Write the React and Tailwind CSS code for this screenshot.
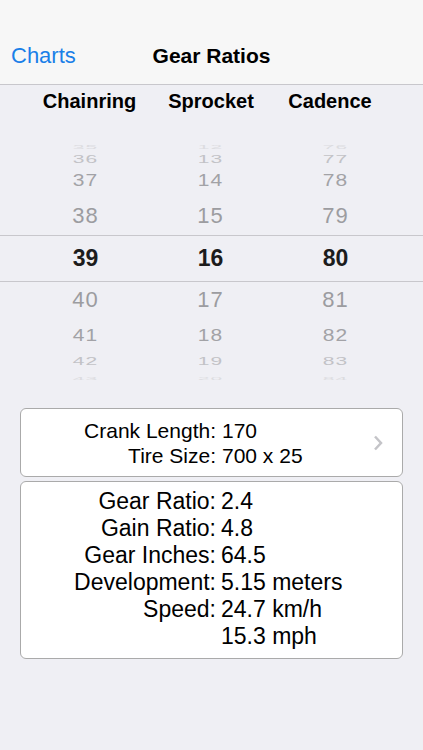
import React from "react";

const rows = [
  { h: "h-[11px]", vals: ["35", "12", "76"], cls: "text-[21px] tracking-[1px] text-[#dcdce0] scale-y-[0.22]" },
  { h: "h-[13px]", vals: ["36", "13", "77"], cls: "text-[21px] tracking-[1px] text-[#c2c2c6] scale-y-[0.55]" },
  { h: "h-[36px]", vals: ["37", "14", "78"], cls: "text-[21px] tracking-[1px] text-[#a2a2a6] scale-y-[0.82]" },
  { h: "h-[38px]", vals: ["38", "15", "79"], cls: "text-[22px] tracking-[1px] text-[#9c9ca0] scale-y-[0.97]" },
  { h: "h-[47px]", vals: ["39", "16", "80"], cls: "text-[23px] font-bold text-[#1c1c1c]", selected: true },
  { h: "h-[35px]", vals: ["40", "17", "81"], cls: "text-[22px] tracking-[1px] text-[#9c9ca0] scale-y-[0.97]" },
  { h: "h-[34px]", vals: ["41", "18", "82"], cls: "text-[21px] tracking-[1px] text-[#a2a2a6] scale-y-[0.8]" },
  { h: "h-[17px]", vals: ["42", "19", "83"], cls: "text-[21px] tracking-[1px] text-[#c2c2c6] scale-y-[0.5]" },
  { h: "h-[10px]", vals: ["43", "20", "84"], cls: "text-[21px] tracking-[1px] text-[#dcdce0] scale-y-[0.2]" },
];

const results = [
  ["Gear Ratio:", "2.4"],
  ["Gain Ratio:", "4.8"],
  ["Gear Inches:", "64.5"],
  ["Development:", "5.15 meters"],
  ["Speed:", "24.7 km/h"],
  ["", "15.3 mph"],
];

export default function App() {
  return (
    <div className="min-h-screen bg-[#efeff4] font-['Liberation_Sans',Arial,sans-serif] text-black">
      {/* Nav bar */}
      <div className="bg-[#f7f7f7] border-b border-[#c8c7cc] pt-[27px]">
        <div className="relative h-[57px] flex items-center justify-center">
          <span className="absolute left-[11px] text-[22px] text-[#1a7fe8]">Charts</span>
          <span className="text-[21px] font-bold">Gear Ratios</span>
        </div>
      </div>

      {/* Column headers */}
      <div className="grid grid-cols-[125px_118px_120px] pl-[27px] h-[32px] items-center text-[20px] font-bold">
        <span className="text-center">Chainring</span>
        <span className="text-center">Sprocket</span>
        <span className="text-center">Cadence</span>
      </div>

      {/* Picker */}
      <div className="mt-[20px] flex flex-col">
        {rows.map((r, i) => (
          <div
            key={i}
            className={`${r.h} grid grid-cols-[125px_125px_125px] pl-[23px] items-center ${
              r.selected ? "border-y border-[#c8c7cc]" : ""
            }`}
          >
            {r.vals.map((v, j) => (
              <span key={j} className={`text-center leading-none ${r.cls}`}>
                {v}
              </span>
            ))}
          </div>
        ))}
      </div>

      {/* Settings card */}
      <div className="mx-[20px] mt-[30px] h-[69px] bg-white border border-[#aaaaaa] rounded-[6px] flex items-center">
        <div className="flex-1 grid grid-cols-[195px_1fr] gap-x-[6px] text-[21px] leading-[25px]">
          <span className="text-right">Crank Length:</span>
          <span>170</span>
          <span className="text-right">Tire Size:</span>
          <span>700 x 25</span>
        </div>
        <svg width="10" height="16" viewBox="0 0 10 16" className="mr-[19px]">
          <polyline points="2,1.5 8,8 2,14.5" fill="none" stroke="#c4c4c8" strokeWidth="2.5" />
        </svg>
      </div>

      {/* Results card */}
      <div className="mx-[20px] mt-[4px] h-[178px] bg-white border border-[#aaaaaa] rounded-[6px] pt-[6px]">
        <div className="grid grid-cols-[195px_1fr] gap-x-[5px] text-[23px] leading-[27px]">
          {results.map(([label, value], i) => (
            <React.Fragment key={i}>
              <span className="text-right">{label}</span>
              <span>{value}</span>
            </React.Fragment>
          ))}
        </div>
      </div>
    </div>
  );
}
